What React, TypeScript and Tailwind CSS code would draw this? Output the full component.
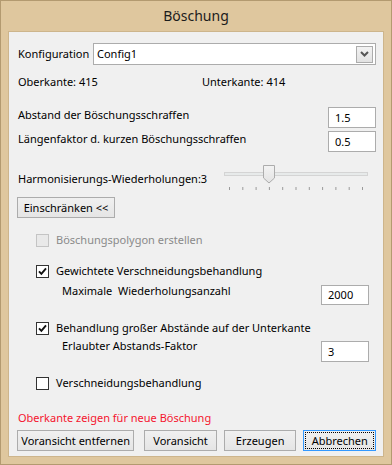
import React from "react";

const ticks = [0, 1, 2, 3, 4, 5, 6, 7, 8, 9, 10];

function CheckRow({ label, checked, disabled, className }: { label: string; checked?: boolean; disabled?: boolean; className: string }) {
    return (
        <div className={`flex h-[16px] items-center pl-[18px] ${className}`}>
            <span
                className={`flex h-[13px] w-[13px] shrink-0 items-center justify-center border ${
                    disabled ? "border-[#c4c4c4] bg-[#e9e9e9]" : "border-[#333333] bg-white"
                }`}
            >
                {checked && (
                    <svg width="9" height="9" viewBox="0 0 9 9">
                        <path d="M1 4.3 L3.4 6.8 L8 1.4" fill="none" stroke="#111" strokeWidth="1.9" />
                    </svg>
                )}
            </span>
            <span className={`ml-[7px] ${disabled ? "text-[#8a8a8a]" : ""}`}>{label}</span>
        </div>
    );
}

function Field({ value, className }: { value: string; className: string }) {
    return (
        <div className={`flex w-[48px] items-center border border-[#acacac] bg-white pl-[6px] ${className}`}>
            {value}
        </div>
    );
}

function Btn({ label, className }: { label: string; className: string }) {
    return (
        <div
            className={`flex h-[21px] items-center justify-center border border-[#acacac] bg-gradient-to-b from-[#f0f0f0] to-[#e5e5e5] ${className}`}
        >
            {label}
        </div>
    );
}

export default function App() {
    return (
        <div className="flex h-[465px] w-[392px] flex-col border border-[#b39a70] bg-[#dfc79e] font-['Noto_Sans',sans-serif] text-[11px] leading-[16px] text-black">
            {/* title bar */}
            <div className="flex h-[30px] items-center justify-center text-[14px] text-[#1c1c1c]">Böschung</div>

            {/* client area */}
            <div className="mx-[7px] flex h-[426px] flex-col border border-[#cdb58c] bg-[#f0f0f0] pl-[9px] pr-[7px]">
                {/* Konfiguration */}
                <div className="mt-[11px] flex h-[22px] items-center">
                    <span className="w-[75px]">Konfiguration</span>
                    <div className="flex h-[22px] flex-1 items-center justify-between border border-[#acacac] bg-white pl-[3px] pr-[2px]">
                        <span>Config1</span>
                        <span className="flex h-[17px] w-[17px] items-center justify-center border border-[#acacac] bg-gradient-to-b from-[#f2f2f2] to-[#e2e2e2]">
                            <svg width="9" height="6" viewBox="0 0 9 6">
                                <path d="M1 1 L4.5 4.5 L8 1" fill="none" stroke="#555" strokeWidth="2" />
                            </svg>
                        </span>
                    </div>
                </div>

                {/* Ober/Unterkante */}
                <div className="mt-[9px] flex h-[16px] items-center">
                    <span className="w-[184px]">Oberkante: 415</span>
                    <span>Unterkante: 414</span>
                </div>

                {/* Abstand */}
                <div className="mt-[17px] flex h-[21px] items-start justify-between">
                    <span>Abstand der Böschungsschraffen</span>
                    <Field value="1.5" className="h-[21px]" />
                </div>

                {/* Längenfaktor */}
                <div className="mt-[3px] flex h-[21px] items-start justify-between">
                    <span>Längenfaktor d. kurzen Böschungsschraffen</span>
                    <Field value="0.5" className="h-[21px]" />
                </div>

                {/* Harmonisierung slider */}
                <div className="mt-[13px] flex h-[26px] items-start">
                    <span className="mt-[6px] w-[204px]">Harmonisierungs-Wiederholungen:3</span>
                    <svg width="148" height="26" viewBox="0 0 148 26">
                        <rect x="2.5" y="7.5" width="143" height="3" fill="#e7eaea" stroke="#d4d4d4" />
                        <defs>
                            <linearGradient id="thumb" x1="0" y1="0" x2="0" y2="1">
                                <stop offset="0" stopColor="#f3f3f3" />
                                <stop offset="1" stopColor="#e3e3e3" />
                            </linearGradient>
                        </defs>
                        <path d="M41.5 0.5 H52.5 V13 L47 18 L41.5 13 Z" fill="url(#thumb)" stroke="#acacac" />
                        {ticks.map((t) => (
                            <line key={t} x1={7.5 + t * 13.3} y1="22" x2={7.5 + t * 13.3} y2="25" stroke="#9a9a9a" />
                        ))}
                    </svg>
                </div>

                {/* Einschränken */}
                <Btn label="Einschränken <<" className="mt-[6px] ml-[-1px] w-[98px]" />

                <CheckRow label="Böschungspolygon erstellen" disabled className="mt-[14px]" />
                <CheckRow label="Gewichtete Verschneidungsbehandlung" checked className="mt-[15px]" />

                <div className="mt-[4px] flex h-[22px] items-start justify-between pl-[44px] pr-[7px]">
                    <span>Maximale&nbsp; Wiederholungsanzahl</span>
                    <Field value="2000" className="mt-[2px] h-[20px]" />
                </div>

                <CheckRow label="Behandlung großer Abstände auf der Unterkante" checked className="mt-[15px]" />

                <div className="mt-[2px] flex h-[24px] items-start justify-between pl-[44px] pr-[7px]">
                    <span>Erlaubter Abstands-Faktor</span>
                    <Field value="3" className="mt-[3px] h-[21px]" />
                </div>

                <CheckRow label="Verschneidungsbehandlung" className="mt-[13px]" />

                <div className="mt-[19px] flex h-[16px] items-center text-[#f5142e]">Oberkante zeigen für neue Böschung</div>

                {/* buttons */}
                <div className="mt-[4px] ml-[-1px] flex items-center">
                    <Btn label="Voransicht entfernen" className="w-[118px]" />
                    <Btn label="Voransicht" className="ml-[10px] w-[73px]" />
                    <Btn label="Erzeugen" className="ml-[7px] w-[73px]" />
                    <div className="ml-[7px] flex h-[21px] w-[73px] items-center justify-center border border-[#3399ff] bg-gradient-to-b from-[#f0f0f0] to-[#e5e5e5] p-[1px]">
                        <span className="flex h-full w-full items-center justify-center border border-dotted border-black">Abbrechen</span>
                    </div>
                </div>
            </div>
        </div>
    );
}
